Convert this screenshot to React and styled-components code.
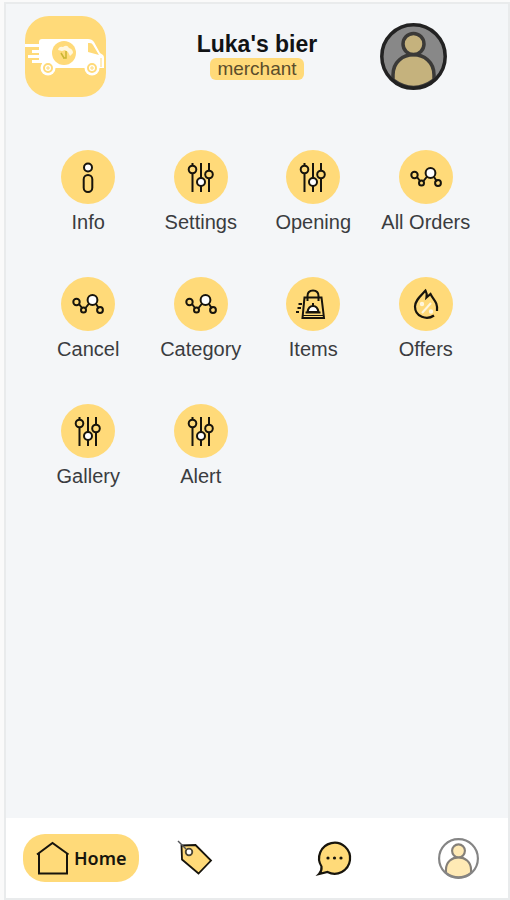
import React from "react";
import styled, { createGlobalStyle } from "styled-components";

const GlobalStyle = createGlobalStyle`
  * { box-sizing: border-box; }
  body {
    margin: 0;
    background: #ffffff;
    font-family: "Liberation Sans", Arial, sans-serif;
  }
`;

const Screen = styled.div`
  display: flex;
  flex-direction: column;
  min-height: 100vh;
  padding: 2px 0 0 4px;
  background: #fafafa;
`;

const Frame = styled.div`
  flex: 1;
  display: flex;
  flex-direction: column;
  border: 2px solid #e9ebec;
  background: #f4f6f8;
`;

const Header = styled.header`
  display: grid;
  grid-template-columns: 1fr auto 1fr;
  padding: 12px 19px 0;
`;

const Logo = styled.svg`
  width: 81px;
  height: 81px;
  border-radius: 24px;
  background: #ffda79;
`;

const Identity = styled.div`
  display: flex;
  flex-direction: column;
  align-items: center;
  padding-top: 14px;
`;

const ShopName = styled.h1`
  margin: 0;
  font: 700 23px/28px "Liberation Sans", Arial, sans-serif;
  color: #111315;
`;

const Role = styled.span`
  padding: 0 7px;
  border-radius: 6px;
  background: #ffda79;
  color: #5b4d2b;
  font-size: 19px;
  line-height: 22px;
`;

const ProfileButton = styled.button`
  justify-self: end;
  align-self: start;
  display: flex;
  margin: 7px 42px 0 0;
  padding: 0;
  border: 0;
  border-radius: 50%;
  background: none;
  cursor: pointer;
`;

const Menu = styled.nav`
  flex: 1;
  display: grid;
  grid-template-columns: repeat(4, 1fr);
  grid-auto-rows: 84px;
  align-content: start;
  row-gap: 43px;
  padding: 53px 26px 40px;
`;

const MenuButton = styled.button`
  display: flex;
  flex-direction: column;
  align-items: center;
  gap: 6px;
  padding: 0;
  border: 0;
  background: none;
  color: #3a3c3f;
  font: 20px/24px "Liberation Sans", Arial, sans-serif;
  white-space: nowrap;
  cursor: pointer;
`;

const Disc = styled.span`
  display: flex;
  width: 54px;
  height: 54px;
  border-radius: 50%;
  background: #ffda79;
`;

const Glyph = styled.svg`
  width: ${(p) => p.$size}px;
  height: ${(p) => p.$size}px;
  flex: none;
  display: block;
  overflow: visible;
  fill: none;
  stroke: #17140c;
  stroke-width: 2;
`;

const TabBar = styled.nav`
  display: grid;
  grid-template-columns: 154fr 139fr 121fr 70fr;
  align-items: center;
  justify-items: start;
  height: 80px;
  padding-left: 17px;
  background: #ffffff;
`;

const Tab = styled.button`
  display: flex;
  align-items: center;
  gap: 3px;
  height: 48px;
  padding: ${(p) => (p.$active ? "0 12px" : "0")};
  border: 0;
  border-radius: 22px;
  background: ${(p) => (p.$active ? "#ffda79" : "transparent")};
  color: #17140c;
  font: 600 18px/24px "Noto Sans", "Liberation Sans", sans-serif;
  cursor: pointer;
`;

function TruckLogo() {
  return (
    <Logo viewBox="0 0 81 81" role="img" aria-label="Delivery van">
      <g fill="#fff">
        <path d="M14 26q0-3 3-3h46q4 0 6 3l6 11 3 2q1 1 1 3v10H17v-5h-3z" />
        <path d="M0 28h17v3H0zM7 34h10v3H7zM3 39h14v3H3zM7 44h9v3H7z" />
        <circle cx="23" cy="52" r="7.500" />
        <circle cx="67" cy="52" r="7.500" />
      </g>
      <path d="M63 27h2q2 0 3 2l6 10-11-3z" fill="#ffda79" />
      <path d="M76 42v9" stroke="#ffda79" strokeWidth="1" />
      <g fill="#fff" stroke="#ffda79" strokeWidth="2">
        <circle cx="23" cy="52" r="4" />
        <circle cx="67" cy="52" r="4" />
      </g>
      <path d="M23 50v4M21 52h4M67 50v4M65 52h4" stroke="#ffda79" />
      <circle cx="39" cy="37" r="12" fill="#ffda79" />
      <path d="M33 34q1-4 5-3 4-3 6 1 4 1 4 5l-3 3-2-4-3-2-3 1z" fill="#fff7df" />
      <path d="M36 37l3 5M41 35v7h-3" fill="none" stroke="#c9b531" strokeWidth="1.500" />
    </Logo>
  );
}

const AvatarGlyph = styled(Glyph)`
  stroke: ${(p) => p.$line};
  stroke-width: 3.5px;
`;

function AvatarIcon({ size, ring, line, back, body }) {
  return (
    <AvatarGlyph $size={size} $line={line} viewBox="0 0 67 67" aria-hidden="true">
      <circle cx="33.500" cy="33.500" r="31.500" fill={back} stroke="none" />
      <path d="M13 57V52C13 25 54 25 54 52V57Q33.500 72 13 57Z" fill={body} />
      <circle cx="33.500" cy="21" r="10.500" fill={body} />
      <circle cx="33.500" cy="33.500" r="31.700" stroke={ring} />
    </AvatarGlyph>
  );
}

const drawings = {
  info: (
    <>
      <circle cx="27" cy="17.500" r="4" fill="#fff" />
      <rect x="22.700" y="25" width="8.600" height="17" rx="4.300" />
    </>
  ),
  sliders: (
    <>
      <path d="M18.500 13v2M18.500 23v19M27 13v15M27 36v6M35 13v7M35 28v14" />
      <circle cx="18.500" cy="19.500" r="3.800" />
      <circle cx="27" cy="32" r="4" fill="#fff" />
      <circle cx="35" cy="24.500" r="3.800" />
    </>
  ),
  nodes: (
    <>
      <path d="M18 27l3 4M24.500 31l4-5M35 27l3 4.500" />
      <circle cx="15.500" cy="25" r="3.200" />
      <circle cx="22.500" cy="33" r="2.500" />
      <circle cx="31.500" cy="23" r="4.900" fill="#fff" />
      <circle cx="39" cy="33" r="2.900" />
    </>
  ),
  bag: (
    <>
      <path d="M18.500 20.500h17l2.500 20.500H16.500z" />
      <path d="M21.500 24v-5q0-5.500 5.500-5.500t5.500 5.500v5" />
      <path d="M17 38.500h20.500" strokeWidth="1" />
      <path d="M21.500 35q1-6 5.500-6t5.500 6z" fill="#fff" />
      <path d="M19.500 35.500h15M27 26v3M12.500 27h3.500M11.500 31h3.500M10 35h3" />
    </>
  ),
  fire: (
    <>
      <path d="M35 38.500C28 43.500 16 40 16 29.500c0-6 5-10 10.500-16 1.500 2.500 1.500 4 1 7l4-3.500c3 6 7.500 8 6.500 17" strokeWidth="2.200" />
      <path d="M23 36l9-10" stroke="#fff7df" />
      <circle cx="23" cy="27" r="1.200" stroke="#fff7df" />
      <circle cx="32" cy="34.500" r="1.200" stroke="#fff7df" />
    </>
  ),
};

const entries = [
  ["Info", "info"],
  ["Settings", "sliders"],
  ["Opening", "sliders"],
  ["All Orders", "nodes"],
  ["Cancel", "nodes"],
  ["Category", "nodes"],
  ["Items", "bag"],
  ["Offers", "fire"],
  ["Gallery", "sliders"],
  ["Alert", "sliders"],
];

export default function App() {
  return (
    <>
      <GlobalStyle />
      <Screen>
        <Frame>
          <Header>
            <TruckLogo />
            <Identity>
              <ShopName>Luka's bier</ShopName>
              <Role>merchant</Role>
            </Identity>
            <ProfileButton aria-label="Profile">
              <AvatarIcon size={67} ring="#222222" line="#3b3a38" back="#888888" body="#c5b27d" />
            </ProfileButton>
          </Header>

          <Menu aria-label="Shop management">
            {entries.map(([label, icon]) => (
              <MenuButton key={label}>
                <Disc>
                  <Glyph $size={54} viewBox="0 0 54 54" aria-hidden="true">
                    {drawings[icon]}
                  </Glyph>
                </Disc>
                {label}
              </MenuButton>
            ))}
          </Menu>

          <TabBar aria-label="Main">
            <Tab $active aria-current="page">
              <Glyph $size={36} viewBox="0 0 36 36" aria-hidden="true">
                <path d="M2 14.500L17.500 3 33.500 14.500M4 13v20.500h28V13" />
              </Glyph>
              Home
            </Tab>
            <Tab aria-label="Offers">
              <Glyph $size={36} viewBox="0 0 36 36" aria-hidden="true">
                <path d="M4.500 5.500L18.500 5 34 20.500 21.500 33.500 5 19.500z" fill="#ffda79" strokeWidth="1.800" />
                <path d="M1 1l8 8" stroke="#55565a" strokeWidth="1.500" />
                <circle cx="12" cy="12" r="3.300" fill="#fff" stroke="#4b4635" strokeWidth="1.800" />
              </Glyph>
            </Tab>
            <Tab aria-label="Messages">
              <Glyph $size={36} viewBox="0 0 36 36" aria-hidden="true">
                <path d="M4.500 26.500A15.500 15.500 0 1 1 10.500 32L2 34Q5 31 4.500 26.500z" fill="#ffda79" strokeWidth="2.200" />
                <g fill="#17140c" stroke="none">
                  <circle cx="11" cy="18" r="1.600" />
                  <circle cx="17.500" cy="18" r="1.600" />
                  <circle cx="24" cy="18" r="1.600" />
                </g>
              </Glyph>
            </Tab>
            <Tab aria-label="Account">
              <AvatarIcon size={41} ring="#858585" line="#858079" back="#ffffff" body="#ffeab5" />
            </Tab>
          </TabBar>
        </Frame>
      </Screen>
    </>
  );
}
